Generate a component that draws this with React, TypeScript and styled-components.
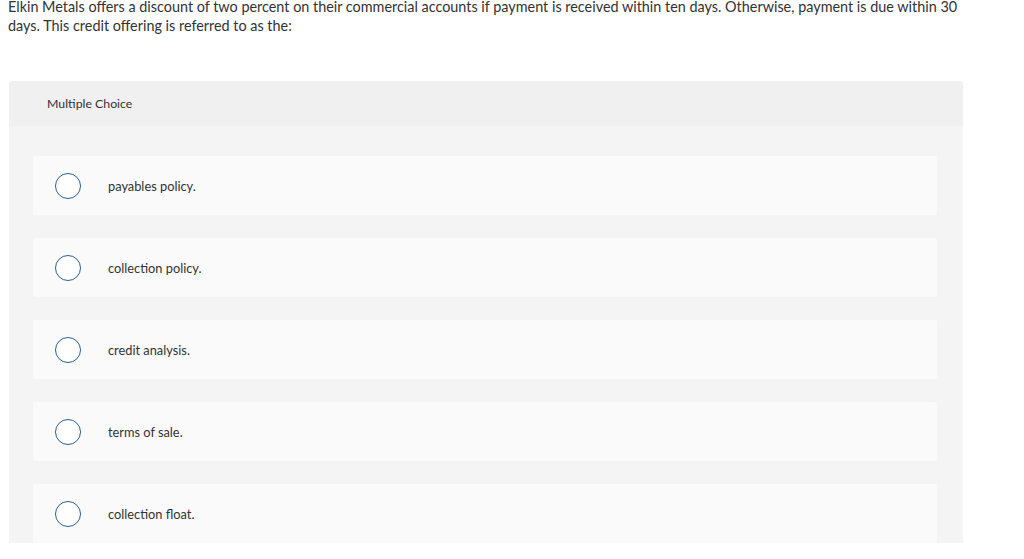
import styled, { createGlobalStyle } from "styled-components";

const GlobalStyle = createGlobalStyle`
  html, body {
    margin: 0;
    padding: 0;
    background: #ffffff;
  }
  body {
    font-family: Lato, "Open Sans", "Liberation Sans", sans-serif;
    color: #333333;
  }
`;

const Page = styled.div`
  width: 980px;
  padding: 0 0 0 9px;
  box-sizing: border-box;
`;

const Question = styled.p`
  margin: -3px 0 0 -1px;
  font-size: 14.4px;
  line-height: 19px;
  color: #333333;
`;

const Panel = styled.section`
  margin-top: 46px;
  width: 954px;
  background: #f4f4f4;
  border-radius: 3px 3px 0 0;
  overflow: hidden;
`;

const PanelHeader = styled.div`
  height: 45px;
  display: flex;
  align-items: center;
  padding-left: 38px;
  background: #f0f0f0;
  font-size: 12.3px;
  color: #333333;
`;

const Options = styled.div`
  display: flex;
  flex-direction: column;
  gap: 23px;
  padding: 30px 26px 0 24px;
`;

const Option = styled.label`
  height: 59px;
  display: flex;
  align-items: center;
  background: #fafafa;
  border-radius: 2px;
  padding-left: 22px;
  cursor: pointer;
`;

const Radio = styled.span`
  width: 24px;
  height: 24px;
  border: 1px solid #2b5d92;
  border-radius: 50%;
  background: #ffffff;
  flex-shrink: 0;
`;

const OptionText = styled.span`
  margin-left: 27px;
  font-size: 12.8px;
  color: #333333;
`;

const choices = [
  "payables policy.",
  "collection policy.",
  "credit analysis.",
  "terms of sale.",
  "collection float.",
];

export default function App() {
  return (
    <>
      <GlobalStyle />
      <Page>
        <Question>
          Elkin Metals offers a discount of two percent on their commercial
          accounts if payment is received within ten days. Otherwise, payment is
          due within 30 days. This credit offering is referred to as the:
        </Question>
        <Panel>
          <PanelHeader>Multiple Choice</PanelHeader>
          <Options>
            {choices.map((c) => (
              <Option key={c}>
                <Radio />
                <OptionText>{c}</OptionText>
              </Option>
            ))}
          </Options>
        </Panel>
      </Page>
    </>
  );
}
